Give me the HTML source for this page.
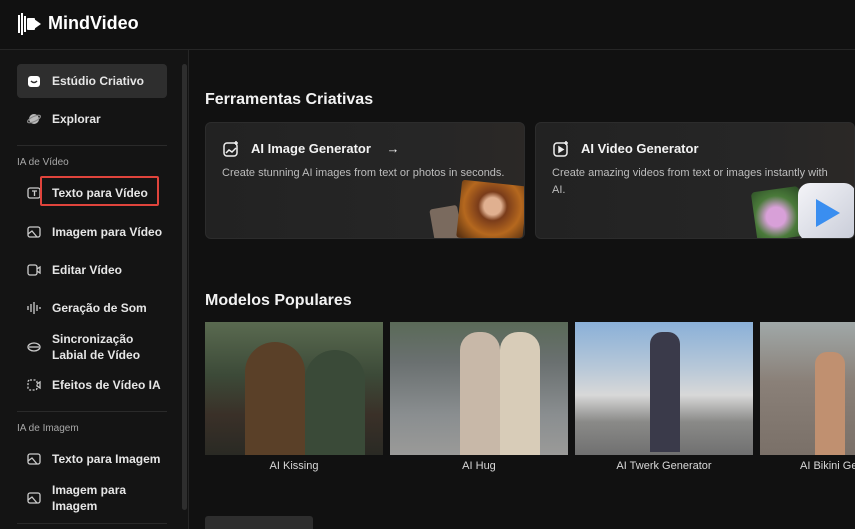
<!DOCTYPE html>
<html style="width:855px;height:529px;overflow:hidden"><head><meta charset="utf-8"><style>
*{margin:0;padding:0;box-sizing:border-box}
body{width:855px;height:529px;overflow:hidden;background:#111111;font-family:"Liberation Sans",sans-serif;color:#e8e8e8;position:relative}
.hdr{position:absolute;left:0;top:0;width:855px;height:50px;border-bottom:1px solid #262626;background:#111}
.logo{position:absolute;left:48px;top:13px;font-size:18px;font-weight:bold;color:#fff}
.side{position:absolute;left:0;top:50px;width:189px;height:479px;border-right:1px solid #262626;background:#141414}
.scr{position:absolute;left:182px;top:14px;width:5px;height:446px;background:#2e2e2e;border-radius:3px}
.it{position:absolute;left:17px;width:150px;height:34px;font-size:12px;font-weight:bold;color:#e6e6e6;display:flex;align-items:center;padding-left:35px;line-height:16px}
.it svg{position:absolute;left:9px;top:50%;margin-top:-8px}
.sel{background:#2e2e2e;border-radius:4px}
.sec{position:absolute;left:17px;font-size:10px;color:#a8a8a8}
.ln{position:absolute;left:17px;width:150px;height:1px;background:#2a2a2a}
h2{position:absolute;font-size:16px;font-weight:bold;color:#f2f2f2}
.card{position:absolute;top:122px;height:117px;border-radius:6px;background:linear-gradient(90deg,#222 0%,#262626 70%,#2b2826 100%);border:1px solid #2c2c2c;overflow:hidden}
.ct{position:absolute;left:45px;top:18px;font-size:13px;font-weight:bold;color:#f3f3f3}
.cd{position:absolute;left:16px;top:42px;font-size:11px;color:#bdbdbd;line-height:17px}
.th{position:absolute;top:322px;width:178px;height:133px;overflow:hidden}
.lb{position:absolute;top:460px;font-size:11px;color:#d8d8d8;text-align:center;width:178px;white-space:nowrap}
</style></head><body>
<div class="hdr">
<svg style="position:absolute;left:18px;top:13px" width="24" height="22" viewBox="0 0 24 22"><g fill="#fff"><rect x="0" y="2" width="2" height="18"/><rect x="3" y="0" width="2" height="22"/><rect x="6" y="3" width="2" height="16"/><rect x="9" y="5" width="8" height="12" rx="1"/><path d="M16 6l7 5-7 5z"/></g></svg>
<div class="logo">MindVideo</div></div>
<div class="side">
<div class="scr"></div>
</div>
<div class="it sel" style="top:64px"><svg width="16" height="16" viewBox="0 0 16 16"><rect x="2" y="3" width="12" height="11" rx="3" fill="#fff"/><path d="M5 8q3 3 6 0" stroke="#2e2e2e" stroke-width="1.5" fill="none"/></svg>Estúdio Criativo</div>
<div class="it" style="top:102px"><svg width="16" height="16" viewBox="0 0 16 16"><circle cx="8" cy="8" r="5" fill="#bbb"/><ellipse cx="8" cy="8" rx="7" ry="2.5" transform="rotate(-25 8 8)" fill="none" stroke="#888" stroke-width="1.2"/></svg>Explorar</div>
<div class="ln" style="top:145px"></div>
<div class="sec" style="top:157px">IA de Vídeo</div>
<div class="it" style="top:176px"><svg width="16" height="16" viewBox="0 0 16 16" fill="none" stroke="#ccc" stroke-width="1.3"><rect x="2" y="3" width="12" height="10" rx="2"/><path d="M6 6h5M8.5 6v5"/></svg>Texto para Vídeo</div>
<div style="position:absolute;left:40px;top:176px;width:119px;height:30px;border:2px solid #e0443c;border-radius:2px"></div>
<div class="it" style="top:215px"><svg width="16" height="16" viewBox="0 0 16 16" fill="none" stroke="#ccc" stroke-width="1.3"><rect x="2" y="3" width="12" height="10" rx="2"/><path d="M2 10l4-3 5 6"/></svg>Imagem para Vídeo</div>
<div class="it" style="top:253px"><svg width="16" height="16" viewBox="0 0 16 16" fill="none" stroke="#ccc" stroke-width="1.3"><rect x="2" y="3" width="9" height="10" rx="2"/><path d="M11 7l3-2v6l-3-2"/></svg>Editar Vídeo</div>
<div class="it" style="top:291px"><svg width="16" height="16" viewBox="0 0 16 16" stroke="#ccc" stroke-width="1.3"><path d="M2 6v4M5 4v8M8 2v12M11 5v6M14 7v2"/></svg>Geração de Som</div>
<div class="it" style="top:329px;height:36px"><svg width="16" height="16" viewBox="0 0 16 16" fill="none" stroke="#ccc" stroke-width="1.3"><ellipse cx="8" cy="8" rx="6" ry="4"/><path d="M3 8h10"/></svg>Sincronização<br>Labial de Vídeo</div>
<div class="it" style="top:368px"><svg width="16" height="16" viewBox="0 0 16 16" fill="none" stroke="#ccc" stroke-width="1.3"><rect x="2" y="3" width="9" height="10" rx="2" stroke-dasharray="2 1.5"/><path d="M11 7l3-2v6l-3-2"/></svg>Efeitos de Vídeo IA</div>
<div class="ln" style="top:411px"></div>
<div class="sec" style="top:423px">IA de Imagem</div>
<div class="it" style="top:442px"><svg width="16" height="16" viewBox="0 0 16 16" fill="none" stroke="#ccc" stroke-width="1.3"><rect x="2" y="3" width="12" height="10" rx="2"/><path d="M2 10l4-3 5 6"/></svg>Texto para Imagem</div>
<div class="it" style="top:480px;height:36px"><svg width="16" height="16" viewBox="0 0 16 16" fill="none" stroke="#ccc" stroke-width="1.3"><rect x="2" y="3" width="12" height="10" rx="2"/><path d="M2 10l4-3 5 6"/></svg>Imagem para<br>Imagem</div>
<div class="ln" style="top:523px"></div>

<h2 style="left:205px;top:91px">Ferramentas Criativas</h2>
<div class="card" style="left:205px;width:320px">
<svg style="position:absolute;left:16px;top:17px" width="18" height="18" viewBox="0 0 18 18" fill="none" stroke="#eee" stroke-width="1.5"><rect x="2" y="3" width="13" height="13" rx="3"/><path d="M4 13l3-3 3 2 4-4"/><path d="M14 1v4M12 3h4"/></svg>
<div class="ct">AI Image Generator <span style="margin-left:12px;font-weight:normal">→</span></div>
<div class="cd" style="width:300px">Create stunning AI images from text or photos in seconds.</div>
<div style="position:absolute;left:226px;top:84px;width:28px;height:34px;background:#7a6a5e;transform:rotate(-10deg);border-radius:3px"></div>
<div style="position:absolute;left:253px;top:60px;width:66px;height:58px;background:radial-gradient(circle at 50% 40%,#e0b090 0 18%,#7a3c1a 30%,#b5681e 60%,#4a2810 100%);transform:rotate(6deg);border-radius:3px"></div>
</div>
<div class="card" style="left:535px;width:320px">
<svg style="position:absolute;left:16px;top:17px" width="18" height="18" viewBox="0 0 18 18" fill="none" stroke="#eee" stroke-width="1.5"><rect x="2" y="3" width="13" height="13" rx="3"/><path d="M7 7v5l4-2.5z" fill="#eee"/><path d="M14 1v4M12 3h4"/></svg>
<div class="ct">AI Video Generator</div>
<div class="cd" style="width:280px">Create amazing videos from text or images instantly with AI.</div>
<div style="position:absolute;left:218px;top:66px;width:48px;height:50px;background:radial-gradient(circle at 45% 55%,#d8a0d8 0 25%,#4a7a3a 55%,#2a4a24);border-radius:4px;transform:rotate(-8deg)"></div>
<div style="position:absolute;left:262px;top:60px;width:58px;height:58px;background:linear-gradient(135deg,#f4f4f8,#c8ccd8);border-radius:12px"></div>
<svg style="position:absolute;left:278px;top:74px" width="28" height="32" viewBox="0 0 28 32"><path d="M2 2l24 14-24 14z" fill="#3a8ef0"/></svg>
</div>

<h2 style="left:205px;top:292px">Modelos Populares</h2>
<div class="th" style="left:205px;background:linear-gradient(180deg,#5a6a50 0%,#3c4a38 40%,#3a3028 70%,#2a2a24 100%)"><div style="position:absolute;left:40px;top:20px;width:60px;height:113px;background:#5a4028;border-radius:30px 30px 0 0"></div><div style="position:absolute;left:100px;top:28px;width:60px;height:105px;background:#3a4a38;border-radius:30px 30px 0 0"></div></div>
<div class="th" style="left:390px;background:linear-gradient(180deg,#5a6a58 0%,#6a7070 30%,#8a8e90 70%,#9a9a98 100%)"><div style="position:absolute;left:70px;top:10px;width:40px;height:123px;background:#c8b8a8;border-radius:18px 18px 0 0"></div><div style="position:absolute;left:110px;top:10px;width:40px;height:123px;background:#d8ccb8;border-radius:18px 18px 0 0"></div></div>
<div class="th" style="left:575px;background:linear-gradient(180deg,#8ab0d8 0%,#b8c8d8 35%,#d8d8d8 55%,#8a8a88 75%,#707070 100%)"><div style="position:absolute;left:75px;top:10px;width:30px;height:120px;background:#3a3a4a;border-radius:12px 12px 0 0"></div></div>
<div class="th" style="left:760px;width:95px;background:linear-gradient(180deg,#a0a8a8 0%,#8a8078 45%,#7a7068 100%)"><div style="position:absolute;left:55px;top:30px;width:30px;height:103px;background:#c09070;border-radius:12px 12px 0 0"></div></div>
<div class="lb" style="left:205px">AI Kissing</div>
<div class="lb" style="left:390px">AI Hug</div>
<div class="lb" style="left:575px">AI Twerk Generator</div>
<div class="lb" style="left:800px;text-align:left;width:auto">AI Bikini Generator</div>
<div style="position:absolute;left:205px;top:516px;width:108px;height:20px;background:#2e2e2e;border-radius:3px"></div>
</body></html>
